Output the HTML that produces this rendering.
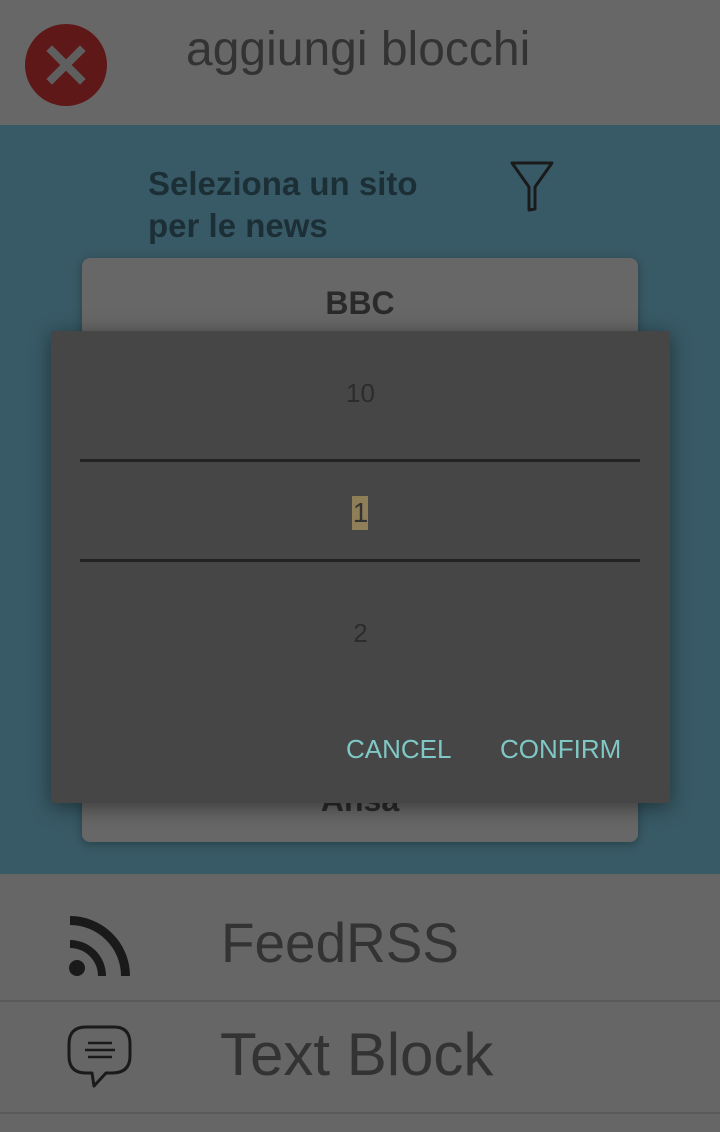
<!DOCTYPE html>
<html><head><meta charset="utf-8"><style>
body{margin:0;width:720px;height:1132px;overflow:hidden;background:#666;font-family:"Liberation Sans",sans-serif;position:relative}
div{position:absolute;box-sizing:border-box}
</style></head><body>
<div style="left:0;top:0;width:720px;height:125px;background:#676767"></div>
<div style="left:25px;top:24px;width:82px;height:82px;border-radius:50%;background:#5e1818"></div>
<svg style="position:absolute;left:25px;top:24px" width="82" height="82"><path d="M27 27L55 55M55 27L27 55" stroke="#5f5f5f" stroke-width="8" stroke-linecap="square"/></svg>
<div style="left:186px;top:22px;font-size:48px;color:#333">aggiungi blocchi</div>
<div style="left:0;top:125px;width:720px;height:749px;background:#385a66"></div>
<div style="left:148px;top:163px;font-size:33px;font-weight:bold;color:#1d2f36;line-height:42px;white-space:nowrap">Seleziona un sito<br>per le news</div>
<svg style="position:absolute;left:508px;top:158px" width="48" height="56"><path d="M4 5H44L27 29V51L21 52V29Z" fill="none" stroke="#1a1a1a" stroke-width="3" stroke-linejoin="round"/></svg>
<div style="left:82px;top:258px;width:556px;height:584px;background:#676767;border-radius:8px;box-shadow:0 2px 10px rgba(0,0,0,.3)"></div>
<div style="left:82px;top:285px;width:556px;text-align:center;font-size:32px;font-weight:bold;color:#2a2a2a">BBC</div>
<div style="left:82px;top:782px;width:556px;text-align:center;font-size:32px;font-weight:bold;color:#2a2a2a">Ansa</div>
<div style="left:51px;top:331px;width:619px;height:472px;background:#464646;box-shadow:0 4px 20px rgba(0,0,0,.45)"></div>
<div style="left:51px;top:378px;width:619px;text-align:center;font-size:26px;color:#2c2c2c">10</div>
<div style="left:80px;top:459px;width:560px;height:3px;background:#222"></div>
<div style="left:352px;top:496px;width:16px;height:34px;background:#8f7e58"></div>
<div style="left:51px;top:497px;width:619px;text-align:center;font-size:28px;color:#333">1</div>
<div style="left:80px;top:559px;width:560px;height:3px;background:#222"></div>
<div style="left:51px;top:618px;width:619px;text-align:center;font-size:26px;color:#2c2c2c">2</div>
<div style="left:346px;top:734px;font-size:26px;color:#7fc8c5">CANCEL</div>
<div style="left:500px;top:734px;font-size:26px;color:#7fc8c5">CONFIRM</div>
<div style="left:0;top:874px;width:720px;height:127px;background:#666"></div>
<div style="left:0;top:1000px;width:720px;height:2px;background:#5a5a5a"></div>
<div style="left:0;top:1112px;width:720px;height:2px;background:#5a5a5a"></div>
<svg style="position:absolute;left:68px;top:914px" width="64" height="66"><circle cx="9" cy="54" r="8" fill="#1a1a1a"/><path d="M2 26A36 36 0 0 1 38 62H30A28 28 0 0 0 2 34Z" fill="#1a1a1a"/><path d="M2 2A60 60 0 0 1 62 62H53A51 51 0 0 0 2 11Z" fill="#1a1a1a"/></svg>
<div style="left:221px;top:910px;font-size:56px;color:#333;transform:scaleX(0.98);transform-origin:left">FeedRSS</div>
<svg style="position:absolute;left:66px;top:1024px" width="68" height="68"><path d="M20 3H48Q64 3 64 20V32Q64 49 46 49H40L28 62L26 49H20Q3 49 3 32V20Q3 3 20 3Z" fill="none" stroke="#1a1a1a" stroke-width="3" stroke-linejoin="round"/><path d="M22 19H46M19 26H49M22 33H46" stroke="#1a1a1a" stroke-width="2.5"/></svg>
<div style="left:220px;top:1020px;font-size:60px;color:#333">Text Block</div>
</body></html>
